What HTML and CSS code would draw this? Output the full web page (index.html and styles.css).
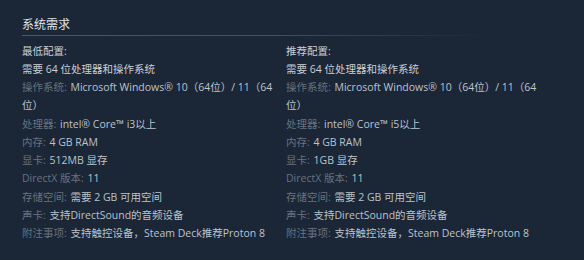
FILE: index.html
```html
<!DOCTYPE html>
<html lang="zh">
<head>
<meta charset="utf-8">
<link rel="stylesheet" href="styles.css">
</head>
<body>
<div class="sysreq">
  <h2 class="title">系统需求</h2>
  <div class="cols">
    <div class="col">
      <div class="head">最低配置:</div>
      <ul class="list">
        <li class="plain">需要 64 位处理器和操作系统</li>
        <li><span class="k">操作系统:</span> Microsoft Windows® 10（64位）/ 11（64位）</li>
        <li><span class="k">处理器:</span> intel® Core™ i3以上</li>
        <li><span class="k">内存:</span> 4 GB RAM</li>
        <li><span class="k">显卡:</span> 512MB 显存</li>
        <li><span class="k">DirectX 版本:</span> 11</li>
        <li><span class="k">存储空间:</span> 需要 2 GB 可用空间</li>
        <li><span class="k">声卡:</span> 支持DirectSound的音频设备</li>
        <li><span class="k">附注事项:</span> 支持触控设备，Steam Deck推荐Proton 8</li>
      </ul>
    </div>
    <div class="col">
      <div class="head">推荐配置:</div>
      <ul class="list">
        <li class="plain">需要 64 位处理器和操作系统</li>
        <li><span class="k">操作系统:</span> Microsoft Windows® 10（64位）/ 11（64位）</li>
        <li><span class="k">处理器:</span> intel® Core™ i5以上</li>
        <li><span class="k">内存:</span> 4 GB RAM</li>
        <li><span class="k">显卡:</span> 1GB 显存</li>
        <li><span class="k">DirectX 版本:</span> 11</li>
        <li><span class="k">存储空间:</span> 需要 2 GB 可用空间</li>
        <li><span class="k">声卡:</span> 支持DirectSound的音频设备</li>
        <li><span class="k">附注事项:</span> 支持触控设备，Steam Deck推荐Proton 8</li>
      </ul>
    </div>
  </div>
</div>
</body>
</html>
```
FILE: styles.css
```css
html, body {
  margin: 0;
  padding: 0;
  background: #1b2637;
}
body {
  width: 584px;
  height: 260px;
  overflow: hidden;
  font-family: "Open Sans", "Noto Sans CJK SC", sans-serif;
  font-size: 10.5px;
  color: #bcc3ca;
}
.sysreq {
  padding: 16px 0 0 22px;
}
.title {
  margin: 0;
  font-size: 12px;
  font-weight: normal;
  color: #e0e4e7;
  line-height: 18px;
  padding-bottom: 2px;
  width: 470px;
  background-image: linear-gradient(to right, #3f5c74 0%, #35516b 55%, rgba(40, 60, 80, 0) 100%);
  background-size: 100% 1px;
  background-repeat: no-repeat;
  background-position: bottom left;
}
.cols {
  display: flex;
  gap: 8px;
  margin-top: 6px;
}
.col {
  width: 256px;
}
.head {
  line-height: 18px;
  color: #c9d0d6;
}
.list {
  list-style: none;
  margin: 0;
  padding: 0;
}
.list li {
  line-height: 18px;
  margin-bottom: 0.3px;
}
.plain {
  color: #c9d0d6;
}
.k {
  color: #67737f;
  margin-right: 1px;
}
```
